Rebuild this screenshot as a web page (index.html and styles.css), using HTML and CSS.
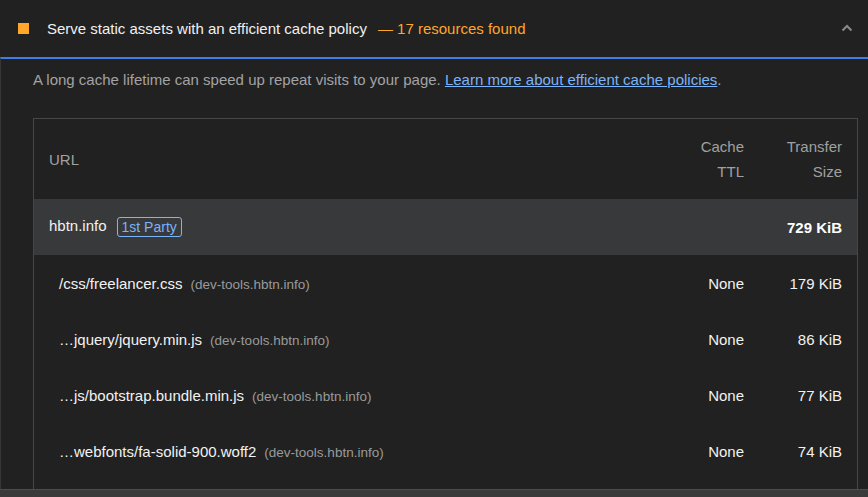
FILE: index.html
```html
<!DOCTYPE html>
<html lang="en">
<head>
<meta charset="utf-8">
<title>Serve static assets with an efficient cache policy</title>
<link rel="stylesheet" href="styles.css">
</head>
<body>
<div class="page">
  <main class="audit">
    <div class="audit-header">
      <span class="score-square"></span>
      <span class="title">Serve static assets with an efficient cache policy</span>
      <span class="display-value">— 17 resources found</span>
      <svg class="chevron" width="12" height="8" viewBox="0 0 12 8"><path d="M1.5 6.5 L6 2 L10.5 6.5" fill="none" stroke="#8a8a8a" stroke-width="2"/></svg>
    </div>
    <div class="audit-body">
      <p class="desc">A long cache lifetime can speed up repeat visits to your page. <a class="link" href="#">Learn more about efficient cache policies</a>.</p>
      <div class="table">
        <div class="row head">
          <div class="cell url">URL</div>
          <div class="cell num ttl">Cache<br>TTL</div>
          <div class="cell num size">Transfer<br>Size</div>
        </div>
        <div class="row group">
          <div class="cell url"><span class="entity">hbtn.info</span><span class="badge">1st Party</span></div>
          <div class="cell num ttl"></div>
          <div class="cell num size strong">729 KiB</div>
        </div>
        <div class="row item">
          <div class="cell url sub"><span class="path">/css/freelancer.css</span><span class="host">(dev-tools.hbtn.info)</span></div>
          <div class="cell num ttl">None</div>
          <div class="cell num size">179 KiB</div>
        </div>
        <div class="row item">
          <div class="cell url sub"><span class="path">…jquery/jquery.min.js</span><span class="host">(dev-tools.hbtn.info)</span></div>
          <div class="cell num ttl">None</div>
          <div class="cell num size">86 KiB</div>
        </div>
        <div class="row item">
          <div class="cell url sub"><span class="path">…js/bootstrap.bundle.min.js</span><span class="host">(dev-tools.hbtn.info)</span></div>
          <div class="cell num ttl">None</div>
          <div class="cell num size">77 KiB</div>
        </div>
        <div class="row item">
          <div class="cell url sub"><span class="path">…webfonts/fa-solid-900.woff2</span><span class="host">(dev-tools.hbtn.info)</span></div>
          <div class="cell num ttl">None</div>
          <div class="cell num size">74 KiB</div>
        </div>
      </div>
    </div>
  </main>
  <div class="bottom-band"></div>
</div>
</body>
</html>
```
FILE: styles.css
```css
* { box-sizing: border-box; }
html, body {
  margin: 0;
  padding: 0;
  background: #212121;
  font-family: "Liberation Sans", Arial, sans-serif;
  color: #e8e8e8;
}
.page {
  height: 497px;
  display: flex;
  flex-direction: column;
  overflow: hidden;
}
.audit {
  flex: 1;
  min-height: 0;
  overflow: hidden;
  display: flex;
  flex-direction: column;
}
.audit-header {
  height: 57px;
  flex: none;
  display: flex;
  align-items: center;
  padding: 0 15px 0 18px;
  font-size: 15px;
}
.score-square {
  width: 11px;
  height: 11px;
  background: #ffa62b;
  flex: none;
}
.title {
  margin-left: 18px;
  color: #f0f0f0;
}
.display-value {
  margin-left: 11px;
  color: #ffa62b;
}
.chevron {
  margin-left: auto;
  margin-top: -1px;
}
.audit-body {
  flex: 1;
  min-height: 0;
  display: flex;
  flex-direction: column;
  border-top: 2px solid #3f7ee8;
  border-left: 1px solid #363636;
  padding: 11px 10px 0 32px;
  overflow: hidden;
}
.desc {
  margin: 0 0 28px 0;
  font-size: 15px;
  line-height: 20px;
  color: #a3a3a3;
}
.link {
  color: #7cb4f8;
  text-decoration: underline;
}
.table {
  flex: 1;
  border: 1px solid #474747;
  border-bottom: none;
}
.row {
  display: grid;
  grid-template-columns: 1fr 90px 98px;
  align-items: center;
  font-size: 15px;
}
.cell {
  padding: 0 15px;
}
.num { text-align: right; }
.head {
  height: 80px;
  color: #a0a0a0;
  line-height: 25px;
}
.group {
  height: 56px;
  background: #38393b;
}
.entity { color: #f2f2f2; }
.badge {
  display: inline-block;
  margin-left: 10px;
  padding: 0 4px;
  height: 20px;
  line-height: 18px;
  font-size: 14px;
  color: #7cb4f8;
  border: 1px solid #7cb4f8;
  border-radius: 3px;
  vertical-align: middle;
}
.strong {
  font-weight: bold;
  color: #ffffff;
}
.item {
  height: 56px;
  color: #f2f2f2;
}
.sub { padding-left: 25px; }
.host {
  margin-left: 8px;
  font-size: 13.5px;
  color: #9a9a9a;
}
.bottom-band {
  height: 8px;
  flex: none;
  background: #3a3a3a;
  border-top: 1px solid #4c4c4c;
}
```
